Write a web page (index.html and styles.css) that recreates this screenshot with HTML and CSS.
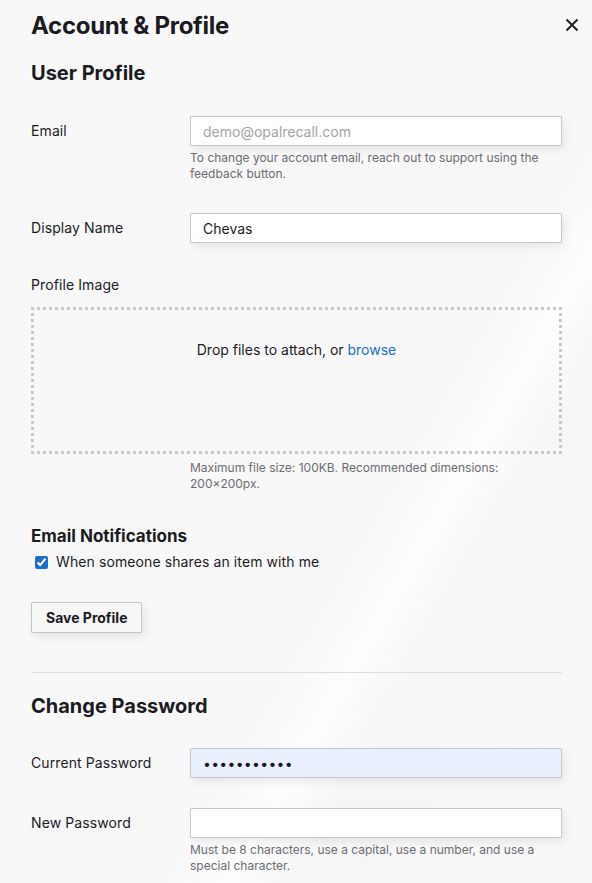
FILE: index.html
```html
<!DOCTYPE html>
<html lang="en">
<head>
  <meta charset="UTF-8" />
  <title>Account &amp; Profile</title>
  <link rel="stylesheet" href="styles.css">
</head>
<body>

<div class="panel">
  <div class="panel-head">
    <h1>Account &amp; Profile</h1>
    <button class="close" aria-label="Close">
      <svg width="14" height="14" viewBox="0 0 14 14"><path d="M1.5 1.5 L12.5 12.5 M12.5 1.5 L1.5 12.5" stroke="#222" stroke-width="2" fill="none"/></svg>
    </button>
  </div>

  <h2>User Profile</h2>

  <div class="row">
    <label for="email">Email</label>
    <div class="field">
      <input type="text" id="email" placeholder="demo@opalrecall.com" />
      <p class="hint">To change your account email, reach out to support using the feedback button.</p>
    </div>
  </div>

  <div class="row">
    <label for="dname">Display Name</label>
    <div class="field">
      <input type="text" id="dname" value="Chevas" />
    </div>
  </div>

  <div class="image-block">
    <div class="image-label">Profile Image</div>
    <div class="dropzone">Drop files to attach, or <a href="#">browse</a></div>
    <p class="hint image-hint">Maximum file size: 100KB. Recommended dimensions: 200×200px.</p>
  </div>

  <h3>Email Notifications</h3>
  <label class="check"><input type="checkbox" checked /> When someone shares an item with me</label>

  <button class="save">Save Profile</button>

  <hr />

  <h2 class="pw-title">Change Password</h2>

  <div class="row">
    <label for="cur">Current Password</label>
    <div class="field">
      <input type="password" id="cur" class="filled" value="password123" />
    </div>
  </div>

  <div class="row">
    <label for="newpw">New Password</label>
    <div class="field">
      <input type="password" id="newpw" />
      <p class="hint">Must be 8 characters, use a capital, use a number, and use a special character.</p>
    </div>
  </div>
</div>

</body>
</html>
```

FILE: styles.css
```css
body {
  margin: 0;
  font-family: Inter, "Noto Sans", sans-serif;
  color: #1b1b1f;
  background: #f8f8f9;
  background-image: linear-gradient(120deg, #f8f8f9 0%, #f8f8f9 60%, #fdfdfd 66%, #f6f6f7 72%, #f8f8f9 100%);
}
.panel {
  padding: 11px 30px 40px 31px;
}
.panel-head {
  display: flex;
  justify-content: space-between;
  align-items: center;
}
h1 {
  margin: 0;
  font-size: 24px;
  line-height: 30px;
  font-weight: 700;
  letter-spacing: -0.3px;
}
.close {
  background: none;
  border: none;
  padding: 0;
  margin-right: -25px;
  width: 30px;
  height: 30px;
  cursor: pointer;
}
h2 {
  margin: 19px 0 0 0;
  font-size: 20px;
  line-height: 26px;
  font-weight: 700;
}
.row {
  display: grid;
  grid-template-columns: 159px 1fr;
  align-items: start;
  margin-top: 30px;
}
.row + .row {
  margin-top: 31px;
}
.row label {
  font-size: 14px;
  line-height: 30px;
  font-weight: 400;
  letter-spacing: 0.1px;
}
input[type="text"], input[type="password"] {
  width: 100%;
  box-sizing: border-box;
  height: 30px;
  padding: 0 12px;
  font-family: inherit;
  font-size: 14px;
  color: #1b1b1f;
  background: #fff;
  border: 1px solid #c6c6c9;
  border-radius: 1px;
  box-shadow: 3px 4px 8px rgba(0, 0, 0, 0.07);
  outline: none;
}
input::placeholder {
  color: #a3a3a7;
}
input.filled {
  background: #e8f0fe;
  letter-spacing: 0.3px;
}
.hint {
  margin: 4px 0 0 0;
  font-size: 12px;
  line-height: 16px;
  color: #6c6c70;
}
.image-block {
  margin-top: 33px;
}
.image-label {
  font-size: 14px;
  font-weight: 400;
  letter-spacing: 0.1px;
  line-height: 18px;
}
.dropzone {
  margin-top: 13px;
  border: 3px dotted #c8c8cb;
  padding-top: 30px;
  box-sizing: border-box;
  height: 147px;
  text-align: center;
  font-size: 14px;
  line-height: 20px;
}
.dropzone a {
  color: #1a6fc4;
  text-decoration: none;
}
.image-hint {
  margin: 6px 0 0 159px;
}
h3 {
  margin: 33px 0 0 0;
  font-size: 17px;
  line-height: 22px;
  font-weight: 700;
}
.check {
  display: flex;
  align-items: center;
  margin-top: 5px;
  font-size: 14px;
  line-height: 20px;
  font-weight: 400;
  letter-spacing: 0.1px;
}
.check input {
  margin: 0 8px 0 4px;
  width: 13px;
  height: 13px;
  accent-color: #1a6fd0;
}
.save {
  display: block;
  margin-top: 30px;
  height: 31px;
  padding: 0 14px;
  font-family: inherit;
  font-size: 14px;
  font-weight: 700;
  color: #1b1b1f;
  background: #f7f7f8;
  border: 1px solid #c6c6c9;
  border-radius: 1px;
  box-shadow: 3px 4px 8px rgba(0, 0, 0, 0.08);
  cursor: pointer;
}
hr {
  margin: 39px 0 0 0;
  border: none;
  border-top: 1px solid #dcdce0;
}
.pw-title {
  margin-top: 20px;
}
.pw-title + .row {
  margin-top: 29px;
}
.pw-title + .row + .row {
  margin-top: 30px;
}
```
